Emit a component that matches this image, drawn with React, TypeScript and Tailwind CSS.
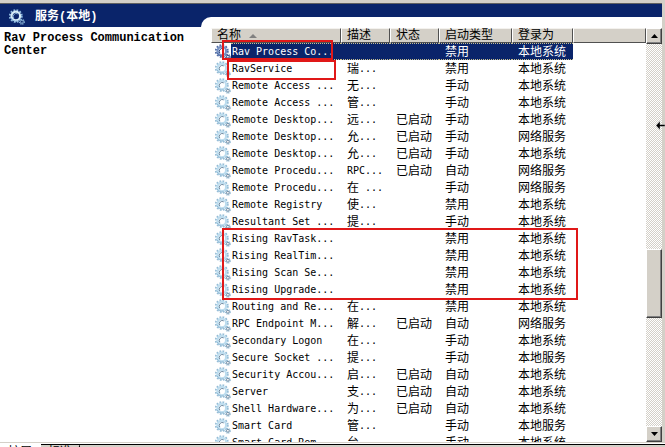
type Service = {
  name: string;
  lead?: string;
  tail?: string;
  started?: boolean;
  startup: string;
  account: string;
};

const LOCAL = "本地系统";
const NETWORK = "网络服务";

const services: Service[] = [
  { name: "Rav Process Co...", startup: "禁用", account: LOCAL },
  { name: "RavService", lead: "瑞", tail: "...", startup: "禁用", account: LOCAL },
  { name: "Remote Access ...", lead: "无", tail: "...", startup: "手动", account: LOCAL },
  { name: "Remote Access ...", lead: "管", tail: "...", startup: "手动", account: LOCAL },
  { name: "Remote Desktop...", lead: "远", tail: "...", started: true, startup: "手动", account: LOCAL },
  { name: "Remote Desktop...", lead: "允", tail: "...", started: true, startup: "手动", account: NETWORK },
  { name: "Remote Desktop...", lead: "允", tail: "...", started: true, startup: "手动", account: LOCAL },
  { name: "Remote Procedu...", tail: "RPC...", started: true, startup: "自动", account: NETWORK },
  { name: "Remote Procedu...", lead: "在", tail: " ...", startup: "手动", account: NETWORK },
  { name: "Remote Registry", lead: "使", tail: "...", startup: "禁用", account: LOCAL },
  { name: "Resultant Set ...", lead: "提", tail: "...", startup: "手动", account: LOCAL },
  { name: "Rising RavTask...", startup: "禁用", account: LOCAL },
  { name: "Rising RealTim...", startup: "禁用", account: LOCAL },
  { name: "Rising Scan Se...", startup: "禁用", account: LOCAL },
  { name: "Rising Upgrade...", startup: "禁用", account: LOCAL },
  { name: "Routing and Re...", lead: "在", tail: "...", startup: "禁用", account: LOCAL },
  { name: "RPC Endpoint M...", lead: "解", tail: "...", started: true, startup: "自动", account: NETWORK },
  { name: "Secondary Logon", lead: "在", tail: "...", startup: "手动", account: LOCAL },
  { name: "Secure Socket ...", lead: "提", tail: "...", startup: "手动", account: "本地服务" },
  { name: "Security Accou...", lead: "启", tail: "...", started: true, startup: "自动", account: LOCAL },
  { name: "Server", lead: "支", tail: "...", started: true, startup: "自动", account: LOCAL },
  { name: "Shell Hardware...", lead: "为", tail: "...", started: true, startup: "自动", account: LOCAL },
  { name: "Smart Card", lead: "管", tail: "...", startup: "手动", account: "本地服务" },
  { name: "Smart Card Rem...", lead: "台", tail: "...", startup: "手动", account: LOCAL },
];

const columns = ["名称", "描述", "状态", "启动类型", "登录为", ""];

const GearIcon = ({ tone = "light" }: { tone?: "light" | "selected" | "title" }) => {
  const teeth = { light: "#94bcd6", selected: "#4d6aa4", title: "#8fbbe0" }[tone];
  const ring = { light: "#bcdcee", selected: "#7590c2", title: "#d6ecf8" }[tone];
  const shade = { light: "#6f8ba3", selected: "#2c4680", title: "#7fa6cc" }[tone];
  const hole = tone === "title" ? "#0a246a" : "#ffffff";
  return (
    <svg viewBox="0 0 16 16" className="size-4 shrink-0" aria-hidden="true">
      <circle cx="6.8" cy="7" r="6" fill="none" stroke={teeth} strokeWidth="1.8" strokeDasharray="1.8 1.34" />
      <circle cx="6.8" cy="7" r="4.3" fill={hole} stroke={ring} strokeWidth="2.2" />
      <path d="M2.2 9a5 5 0 0 0 6.4 2.7" fill="none" stroke={teeth} strokeWidth="1" />
      <path d="M4.8 9.2A3 3 0 0 1 8.8 4.9" fill="none" stroke={shade} strokeWidth="1" />
      <circle cx="12.9" cy="12.8" r="2.3" fill={hole} stroke={teeth} strokeWidth="1.4" strokeDasharray="1.1 0.7" />
      <circle cx="12.9" cy="12.8" r="1.4" fill={hole} stroke={shade} strokeWidth="1" />
    </svg>
  );
};

const HeaderCell = ({ label, sorted }: { label: string; sorted: boolean }) => (
  <th className="p-0 font-normal">
    <button
      type="button"
      aria-label={label || "空白列"}
      className="flex h-[15px] w-full items-center gap-2 border border-t-[#f4f2ee] border-r-[#505050] border-b-[#505050] border-l-white bg-[#d4d0c8] pl-[5px] text-left leading-[13px] whitespace-nowrap"
    >
      {label}
      {sorted && (
        <svg viewBox="0 0 8 4" className="h-1 w-2" aria-hidden="true">
          <path d="M0 4 4 0l4 4z" fill="#808080" />
        </svg>
      )}
    </button>
  </th>
);

const ServiceRow = ({ service, selected }: { service: Service; selected: boolean }) => {
  const fill = selected
    ? "flex h-[17px] items-center border-y border-dotted border-[#c8c090] bg-[#0a246a] text-white"
    : "flex h-[17px] items-center";
  return (
    <tr>
      <td className="p-0">
        <div className="flex h-[17px] items-center pl-1">
          <GearIcon tone={selected ? "selected" : "light"} />
          <div className={`${fill} flex-1 pl-px font-['DejaVu_Sans_Mono','Noto_Sans_CJK_SC',monospace] text-[10px] whitespace-pre`}>
            {service.name}
          </div>
        </div>
      </td>
      <td className="p-0">
        <div className={`${fill} pl-[6px] whitespace-pre`}>
          {service.lead}
          <span className="font-['DejaVu_Sans_Mono',monospace] text-[10px]">{service.tail}</span>
        </div>
      </td>
      <td className="p-0">
        <div className={`${fill} pl-[6px]`}>{service.started ? "已启动" : ""}</div>
      </td>
      <td className="p-0">
        <div className={`${fill} pl-[6px]`}>{service.startup}</div>
      </td>
      <td className="p-0">
        <div className={`${fill} pl-[6px]`}>{service.account}</div>
      </td>
      <td className="p-0" />
    </tr>
  );
};

const ScrollButton = ({ direction }: { direction: "up" | "down" }) => (
  <button
    type="button"
    aria-label={direction === "up" ? "向上滚动" : "向下滚动"}
    className="flex h-4 w-full shrink-0 items-center justify-center border border-t-white border-r-[#404040] border-b-[#404040] border-l-white bg-[#d4d0c8] shadow-[inset_-1px_-1px_0_#808080]"
  >
    <svg viewBox="0 0 7 4" className="h-1 w-[7px]" aria-hidden="true">
      <path d={direction === "up" ? "M0 4 3.5 0 7 4z" : "M0 0h7L3.5 4z"} />
    </svg>
  </button>
);

const ScrollBar = () => (
  <div className="flex w-4 shrink-0 flex-col bg-[repeating-conic-gradient(#d4d0c8_0_25%,#ffffff_0_50%)] bg-[length:2px_2px]">
    <ScrollButton direction="up" />
    <div className="grow-[206]" />
    <div className="h-[69px] shrink-0 border border-t-white border-r-[#404040] border-b-[#404040] border-l-white bg-[#d4d0c8] shadow-[inset_-1px_-1px_0_#808080]" />
    <div className="grow-[108]" />
    <ScrollButton direction="down" />
  </div>
);

const ServiceList = () => (
  <div className="relative min-w-0 flex-1 overflow-hidden">
    <table className="w-full table-fixed border-collapse">
      <colgroup>
        <col className="w-[130px]" />
        <col className="w-[49px]" />
        <col className="w-[49px]" />
        <col className="w-[73px]" />
        <col className="w-[61px]" />
        <col />
      </colgroup>
      <thead>
        <tr>
          {columns.map((label, i) => (
            <HeaderCell key={label} label={label} sorted={i === 0} />
          ))}
        </tr>
      </thead>
      <tbody>
        {services.map((service, i) => (
          <ServiceRow key={i} service={service} selected={i === 0} />
        ))}
      </tbody>
    </table>
    {/* red marks around the Rising services */}
    <div className="pointer-events-none absolute top-3 left-[11px] h-5 w-[111px] border-2 border-[#e01818]" />
    <div className="pointer-events-none absolute top-8 left-4 h-5 w-[109px] border-2 border-[#e01818]" />
    <div className="pointer-events-none absolute top-[200px] left-[11px] h-[72px] w-[356px] border-2 border-[#e01818]" />
  </div>
);

export default function App() {
  return (
    <div className="relative flex h-screen flex-col overflow-hidden bg-white font-['Liberation_Sans','Noto_Sans_CJK_SC',sans-serif] text-xs text-black">
      <div className="h-[3px] shrink-0 bg-[#d4d0c8]" />
      <div className="flex min-h-0 flex-1 border-r-[3px] border-[#d4d0c8]">
        <div className="flex min-w-0 flex-1 flex-col border-t border-[#606060]">
          <div className="flex min-h-0 flex-1 bg-[linear-gradient(#0a246a_23px,#ffffff_23px)]">
            <aside className="w-[201px] shrink-0">
              <header className="flex h-[23px] items-center gap-[10px] pt-[3px] pl-[9px] font-['Liberation_Mono','Noto_Sans_CJK_SC',monospace] font-bold text-white">
                <GearIcon tone="title" />
                <h1>服务(本地)</h1>
              </header>
              <h2 className="pt-[5px] pl-1 font-['Liberation_Mono','Noto_Sans_CJK_SC',monospace] leading-[13px] font-bold">
                Rav Process Communication Center
              </h2>
            </aside>
            <main className="mt-[13px] flex min-w-0 flex-1 rounded-tl-[10px] bg-white pt-[11px] pl-[10px]">
              <ServiceList />
              <ScrollBar />
            </main>
          </div>
        </div>
      </div>
      <footer className="flex h-[5px] shrink-0 overflow-hidden border-t border-[#d4d0c8] bg-white pt-px leading-[14px]">
        <button type="button" className="flex w-[41px] shrink-0 items-start pt-px pl-2">
          扩展
        </button>
        <div className="flex h-4 flex-1 border-t border-black bg-[#d4d0c8]">
          <button type="button" className="flex items-start pl-[7px]">
            标准
          </button>
          <svg viewBox="0 0 8 16" className="h-4 w-2" aria-hidden="true">
            <path d="M8 0 2 16" stroke="#000" fill="none" />
          </svg>
        </div>
      </footer>
      <svg viewBox="0 0 9 9" className="absolute top-[121px] right-0 size-[9px]" aria-hidden="true">
        <path d="M0 4.5 4 0v3.5h5v2H4V9z" fill="#000" stroke="#fff" strokeWidth="0.4" />
      </svg>
    </div>
  );
}
